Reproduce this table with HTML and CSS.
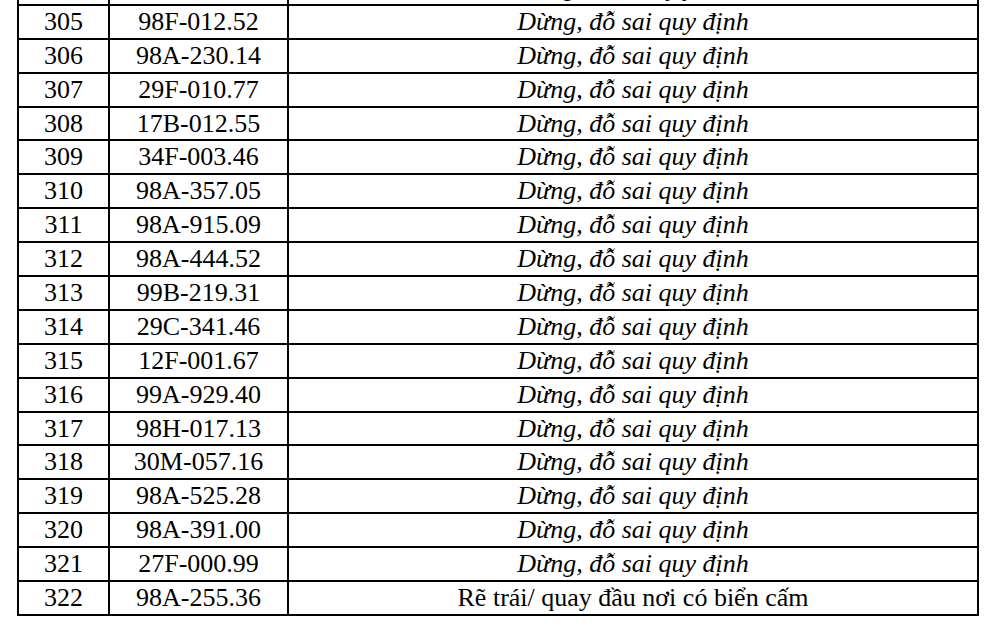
FILE: index.html
```html
<!DOCTYPE html>
<html lang="vi">
<head>
<meta charset="utf-8">
<title>Danh sách vi phạm</title>
<link rel="stylesheet" href="styles.css">
</head>
<body>
<table class="list">
<colgroup><col class="c-no"><col class="c-plate"><col class="c-err"></colgroup>
<tbody>
<tr><td></td><td></td><td class="it">Dừng, đỗ sai quy định</td></tr>
<tr><td>305</td><td>98F-012.52</td><td class="it">Dừng, đỗ sai quy định</td></tr>
<tr><td>306</td><td>98A-230.14</td><td class="it">Dừng, đỗ sai quy định</td></tr>
<tr><td>307</td><td>29F-010.77</td><td class="it">Dừng, đỗ sai quy định</td></tr>
<tr><td>308</td><td>17B-012.55</td><td class="it">Dừng, đỗ sai quy định</td></tr>
<tr><td>309</td><td>34F-003.46</td><td class="it">Dừng, đỗ sai quy định</td></tr>
<tr><td>310</td><td>98A-357.05</td><td class="it">Dừng, đỗ sai quy định</td></tr>
<tr><td>311</td><td>98A-915.09</td><td class="it">Dừng, đỗ sai quy định</td></tr>
<tr><td>312</td><td>98A-444.52</td><td class="it">Dừng, đỗ sai quy định</td></tr>
<tr><td>313</td><td>99B-219.31</td><td class="it">Dừng, đỗ sai quy định</td></tr>
<tr><td>314</td><td>29C-341.46</td><td class="it">Dừng, đỗ sai quy định</td></tr>
<tr><td>315</td><td>12F-001.67</td><td class="it">Dừng, đỗ sai quy định</td></tr>
<tr><td>316</td><td>99A-929.40</td><td class="it">Dừng, đỗ sai quy định</td></tr>
<tr><td>317</td><td>98H-017.13</td><td class="it">Dừng, đỗ sai quy định</td></tr>
<tr><td>318</td><td>30M-057.16</td><td class="it">Dừng, đỗ sai quy định</td></tr>
<tr><td>319</td><td>98A-525.28</td><td class="it">Dừng, đỗ sai quy định</td></tr>
<tr><td>320</td><td>98A-391.00</td><td class="it">Dừng, đỗ sai quy định</td></tr>
<tr><td>321</td><td>27F-000.99</td><td class="it">Dừng, đỗ sai quy định</td></tr>
<tr><td>322</td><td>98A-255.36</td><td>Rẽ trái/ quay đầu nơi có biển cấm</td></tr>
</tbody>
</table>
</body>
</html>
```

FILE: styles.css
```css
html, body {
  margin: 0;
  padding: 0;
  background: #fff;
  overflow: hidden;
}
body {
  font-family: "Liberation Serif", "Times New Roman", serif;
  font-size: 26px;
  color: #000;
}
.list {
  border-collapse: collapse;
  table-layout: fixed;
  width: 960px;
  margin: -30px 0 0 17px;
}
.c-no { width: 91px; }
.c-plate { width: 179px; }
.c-err { width: 690px; }
.list td {
  border: 2px solid #000;
  height: 31.9px;
  padding: 0;
  text-align: center;
  vertical-align: middle;
  line-height: 30px;
  white-space: nowrap;
}
.list td.it {
  font-style: italic;
}
```
